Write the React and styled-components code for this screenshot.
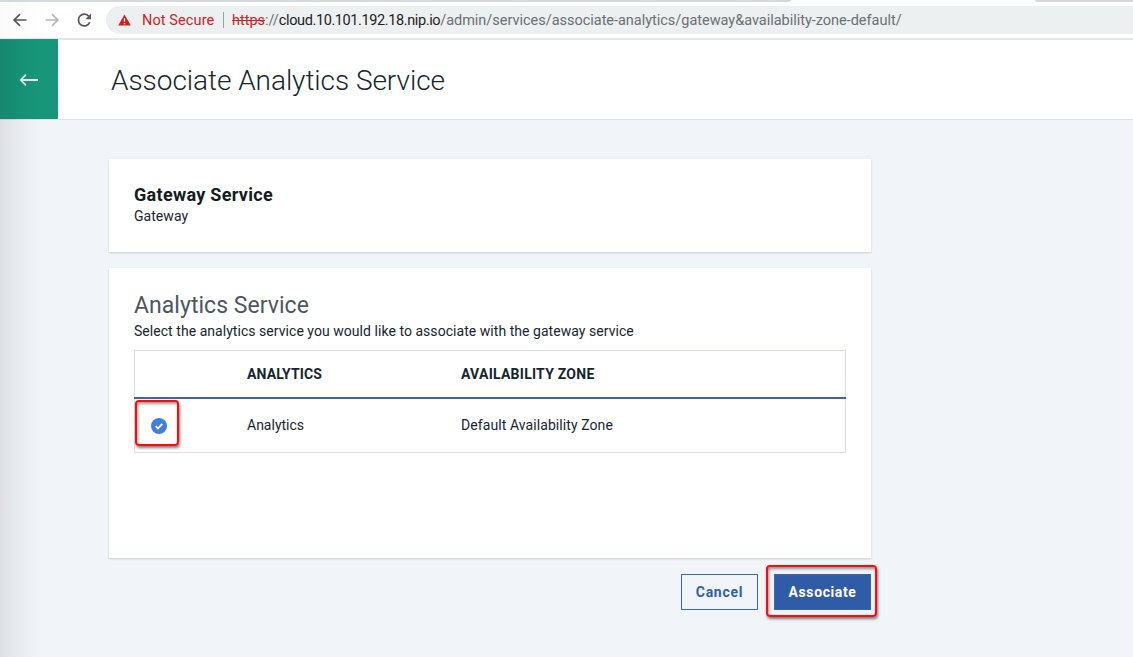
import React from "react";
import styled, { createGlobalStyle } from "styled-components";

const Global = createGlobalStyle`
  * { box-sizing: border-box; }
  html, body { margin: 0; overflow: hidden; }
  body { font-family: Roboto, "Liberation Sans", sans-serif; color: #152530; background: #f1f5fa; }
`;

const Window = styled.div`
  position: relative;
  display: flex;
  flex-direction: column;
  width: 1133px;
  height: 657px;
  overflow: hidden;
  background: #f1f5fa;
`;

const TabStrip = styled.div`
  display: flex;
  justify-content: space-between;
  height: 2px;
  background: #fff;
`;

const InactiveTab = styled.div`
  width: ${(p) => p.$width}px;
  background: #d5d9e0;
  border-radius: ${(p) => (p.$end ? "0 0 0 3px" : "0 0 3px 0")};
`;

const Toolbar = styled.div`
  display: flex;
  align-items: center;
  height: 38px;
  padding-left: 12px;
  background: linear-gradient(90deg, #fafafa, #fff 50px);
  border-bottom: 2px solid #e4e5e5;
`;

const NavIcon = styled.svg`
  width: 16px;
  height: 16px;
  margin-right: 16px;
  fill: none;
  stroke: ${(p) => (p.$muted ? "#b3b5b7" : "#55575a")};
  stroke-width: 1.7;
`;

const AddressBar = styled.div`
  display: flex;
  align-items: center;
  flex: 1;
  height: 28px;
  margin-left: -2px;
  padding-left: 12px;
  background: #edf0f1;
  border-radius: 14px 0 0 14px;
  font-size: 14.5px;
  white-space: pre;
`;

const Warning = styled.svg`
  width: 13px;
  height: 12px;
`;

const NotSecure = styled.span`
  margin-left: 11px;
  width: 73px;
  color: #cf2222;
  letter-spacing: 0.1px;
`;

const Separator = styled.span`
  width: 1px;
  height: 16px;
  margin: 0 8px;
  background: #9fa2a4;
`;

const Url = styled.span`
  color: #6b6f73;
  letter-spacing: -0.02px;
`;

const Scheme = styled.span`
  color: #d02525;
  text-decoration: line-through;
`;

const Host = styled.span`
  color: #1f2022;
  letter-spacing: -0.39px;
`;

const Header = styled.header`
  display: flex;
  align-items: center;
  height: 80px;
  background: #fff;
  border-bottom: 1px solid #dcdfe3;
`;

const BackButton = styled.button`
  display: flex;
  align-items: center;
  justify-content: center;
  width: 58px;
  height: 80px;
  margin-top: -1px;
  padding: 2px 0 0;
  border: 0;
  background: #17967a;
`;

const Title = styled.h1`
  margin: 0 0 0 53px;
  padding-top: 2px;
  font-size: 28px;
  line-height: 36px;
  font-weight: 300;
  letter-spacing: -0.05px;
  white-space: nowrap;
`;

const Main = styled.main`
  display: flex;
  flex-direction: column;
  gap: 16px;
  width: 762px;
  margin: 39px 0 0 109px;
`;

const Card = styled.section`
  height: ${(p) => p.$height}px;
  padding: 25px 25px 0;
  background: #fff;
  box-shadow: 0 1px 2px rgba(0, 0, 0, 0.16);
`;

const ServiceName = styled.h2`
  margin: 0;
  font-size: 18px;
  line-height: 22px;
  font-weight: 700;
  letter-spacing: 0.3px;
  color: #121c24;
`;

const SectionName = styled.h2`
  margin: 0 0 2px;
  font-size: 23px;
  line-height: 26px;
  font-weight: 400;
  letter-spacing: 0.04px;
  color: #4c5761;
`;

const Copy = styled.p`
  margin: 0;
  font-size: 14px;
  line-height: 20px;
  letter-spacing: 0.045px;
  white-space: nowrap;
`;

const Table = styled.div`
  margin-top: 9px;
  width: 712px;
  border: 1px solid #dadee4;
`;

const Row = styled.div`
  display: grid;
  grid-template-columns: 112px 214px 1fr;
  align-items: center;
  height: ${(p) => (p.$head ? 48 : 53)}px;
  margin: 0 -1px;
  padding-left: 1px;
  padding-bottom: ${(p) => (p.$head ? 0 : 2)}px;
  border-bottom: ${(p) => (p.$head ? "2px solid #3a66ad" : "0")};
  font-size: 14px;
  font-weight: ${(p) => (p.$head ? 700 : 400)};
`;

const Cell = styled.span`
  letter-spacing: ${(p) => p.$track || 0}px;
  white-space: nowrap;
`;

const Check = styled.svg`
  display: block;
  width: 16px;
  height: 16px;
  margin: 2px 0 0 16px;
`;

const Actions = styled.div`
  display: flex;
  justify-content: flex-end;
  gap: 16px;
`;

const Button = styled.button`
  width: ${(p) => p.$width}px;
  height: 36px;
  padding: 0;
  border: 1px solid #3b67ae;
  background: ${(p) => (p.$primary ? "#2f5ba7" : "transparent")};
  color: ${(p) => (p.$primary ? "#fff" : "#325fa9")};
  font: 700 14px Roboto, sans-serif;
  letter-spacing: ${(p) => p.$track}px;
`;

const Highlight = styled.div`
  position: absolute;
  left: ${(p) => p.$x}px;
  top: ${(p) => p.$y}px;
  width: ${(p) => p.$w}px;
  height: ${(p) => p.$h}px;
  border: 2px solid #fb0b0b;
  border-radius: 4px;
  box-shadow: 1px 2px 3px rgba(0, 0, 0, 0.5), inset 1px 2px 3px rgba(0, 0, 0, 0.4);
  pointer-events: none;
`;

const EdgeShade = styled.div`
  position: absolute;
  left: 0;
  top: 40px;
  bottom: 0;
  width: 42px;
  background: linear-gradient(90deg, rgba(20, 0, 0, 0.09), rgba(10, 0, 0, 0.035) 50%, transparent);
  pointer-events: none;
`;

export default function App() {
  return (
    <Window>
      <Global />
      <TabStrip>
        <InactiveTab $width={791} />
        <InactiveTab $width={98} $end />
      </TabStrip>
      <Toolbar>
        <NavIcon viewBox="0 0 16 16"><path d="M14.5 8H2.5M8 2.2L2.2 8L8 13.8" /></NavIcon>
        <NavIcon viewBox="0 0 16 16" $muted><path d="M1.5 8H13.5M8 2.2L13.8 8L8 13.8" /></NavIcon>
        <NavIcon viewBox="0 0 16 16">
          <path d="M13.8 10.2A5.9 5.9 0 1 1 13 4.4" />
          <path d="M15 1.6V7.2H9.4Z" fill="#55575a" stroke="none" />
        </NavIcon>
        <AddressBar>
          <Warning viewBox="0 0 13 12">
            <path d="M6.5 0.4L12.8 11.6H0.2Z" fill="#d01f1f" />
            <path d="M6.5 4.2V7.8M6.5 8.9V10.2" stroke="#edf0f1" strokeWidth="1.2" />
          </Warning>
          <NotSecure>Not Secure</NotSecure>
          <Separator />
          <Url><Scheme>https</Scheme>://<Host>cloud.10.101.192.18.nip.io</Host>/admin/services/associate-analytics/gateway&amp;availability-zone-default/</Url>
        </AddressBar>
      </Toolbar>
      <Header>
        <BackButton aria-label="Back">
          <svg width="20" height="14" viewBox="0 0 20 14" fill="none" stroke="#e4f3ef" strokeWidth="1.8">
            <path d="M19 7H2M7 1.6L1.8 7L7 12.4" />
          </svg>
        </BackButton>
        <Title>Associate Analytics Service</Title>
      </Header>
      <Main>
        <Card $height={93}>
          <ServiceName>Gateway Service</ServiceName>
          <Copy>Gateway</Copy>
        </Card>
        <Card $height={290}>
          <SectionName>Analytics Service</SectionName>
          <Copy>Select the analytics service you would like to associate with the gateway service</Copy>
          <Table>
            <Row $head>
              <span />
              <Cell $track={0.12}>ANALYTICS</Cell>
              <Cell $track={0.25}>AVAILABILITY ZONE</Cell>
            </Row>
            <Row>
              <Check viewBox="0 0 16 16">
                <circle cx="8" cy="8" r="8" fill="#417fdf" />
                <path d="M4.7 8.1L7 10.4L11.3 5.9" fill="none" stroke="#fff" strokeWidth="1.8" />
              </Check>
              <Cell>Analytics</Cell>
              <Cell $track={0.08}>Default Availability Zone</Cell>
            </Row>
          </Table>
        </Card>
        <Actions>
          <Button $width={77} $track={0.75}>Cancel</Button>
          <Button $width={97} $track={0.6} $primary>Associate</Button>
        </Actions>
      </Main>
      <Highlight $x={135} $y={400} $w={44} $h={46} />
      <Highlight $x={766} $y={565} $w={111} $h={52} />
      <EdgeShade />
    </Window>
  );
}
